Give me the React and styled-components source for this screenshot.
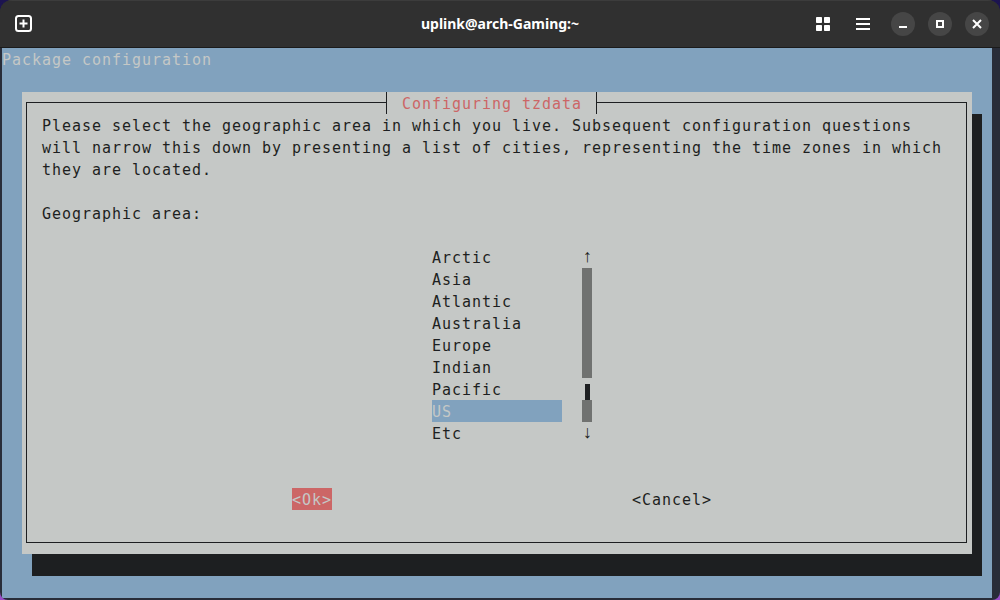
import styled, { createGlobalStyle } from "styled-components";

const GlobalStyle = createGlobalStyle`
  html, body {
    margin: 0;
    padding: 0;
    background: #000;
  }
`;

const areas = ["Arctic", "Asia", "Atlantic", "Australia", "Europe", "Indian", "Pacific", "US", "Etc"];

const App = () => {
  return (
    <>
      <GlobalStyle />
      <Desktop>
        <Window>
          <HeaderBar>
            <HeaderLeft>
              <IconButton aria-label="New tab">
                <svg width="17" height="17" viewBox="0 0 17 17" fill="none">
                  <rect x="1" y="1" width="15" height="15" rx="2.5" stroke="#fff" strokeWidth="2" />
                  <path d="M8.5 4.5v8M4.5 8.5h8" stroke="#fff" strokeWidth="2" />
                </svg>
              </IconButton>
            </HeaderLeft>
            <HeaderTitle>uplink@arch-Gaming:~</HeaderTitle>
            <HeaderRight>
              <IconButton aria-label="Tabs overview">
                <svg width="14" height="14" viewBox="0 0 14 14" fill="#fff">
                  <rect x="0" y="0" width="6" height="6" rx="0.8" />
                  <rect x="8" y="0" width="6" height="6" rx="0.8" />
                  <rect x="0" y="8" width="6" height="6" rx="0.8" />
                  <rect x="8" y="8" width="6" height="6" rx="0.8" />
                </svg>
              </IconButton>
              <MenuButton aria-label="Menu">
                <svg width="14" height="12" viewBox="0 0 14 12" fill="#fff">
                  <rect x="0" y="0" width="14" height="2" />
                  <rect x="0" y="5" width="14" height="2" />
                  <rect x="0" y="10" width="14" height="2" />
                </svg>
              </MenuButton>
              <RoundButtons>
                <RoundButton aria-label="Minimize">
                  <svg width="10" height="10" viewBox="0 0 10 10" fill="#fff">
                    <rect x="1" y="7" width="8" height="2" />
                  </svg>
                </RoundButton>
                <RoundButton aria-label="Maximize">
                  <svg width="10" height="10" viewBox="0 0 10 10" fill="none">
                    <rect x="2" y="2" width="6" height="6" stroke="#fff" strokeWidth="2" />
                  </svg>
                </RoundButton>
                <RoundButton aria-label="Close">
                  <svg width="10" height="10" viewBox="0 0 10 10" fill="none">
                    <path d="M1 1l8 8M9 1l-8 8" stroke="#fff" strokeWidth="2" />
                  </svg>
                </RoundButton>
              </RoundButtons>
            </HeaderRight>
          </HeaderBar>
          <TerminalArea>
            <Screen>
              <ScreenTitle>Package configuration</ScreenTitle>
              <Dialog>
                <Frame>
                  <Legend>Configuring tzdata</Legend>
                  <Line>Please select the geographic area in which you live. Subsequent configuration questions</Line>
                  <Line>will narrow this down by presenting a list of cities, representing the time zones in which</Line>
                  <Line>they are located.</Line>
                  <Line>&nbsp;</Line>
                  <Line>Geographic area:</Line>
                  <ListArea>
                    <List>
                      {areas.map((area) => (
                        <ListItem key={area} $selected={area === "US"}>{area}</ListItem>
                      ))}
                    </List>
                    <Scrollbar>
                      <Arrow>↑</Arrow>
                      <Track />
                      <ThumbCell><Thumb /></ThumbCell>
                      <TrackCell />
                      <Arrow>↓</Arrow>
                    </Scrollbar>
                  </ListArea>
                  <Buttons>
                    <DialogButton $active>&lt;Ok&gt;</DialogButton>
                    <DialogButton>&lt;Cancel&gt;</DialogButton>
                  </Buttons>
                </Frame>
              </Dialog>
            </Screen>
          </TerminalArea>
        </Window>
      </Desktop>
    </>
  );
};

export default App;

const Desktop = styled.div`
  width: 1000px;
  height: 600px;
  overflow: hidden;
  background: linear-gradient(180deg, #1c1450 0%, #4a2a80 50%, #9a4fc8 100%);
`;

const Window = styled.div`
  width: 1000px;
  height: 600px;
  display: flex;
  flex-direction: column;
  border-radius: 12px 12px 8px 8px;
  overflow: hidden;
  background: #292d39;
`;

const HeaderBar = styled.div`
  height: 47px;
  flex: none;
  display: grid;
  grid-template-columns: 1fr auto 1fr;
  align-items: center;
  background: #303030;
  border-bottom: 1px solid #1b1b1b;
  box-shadow: inset 0 1px 0 #3c3c3c;
`;

const HeaderLeft = styled.div`
  display: flex;
  align-items: center;
  padding-left: 15px;
`;

const HeaderRight = styled.div`
  display: flex;
  align-items: center;
  justify-content: flex-end;
  padding-right: 11px;
`;

const HeaderTitle = styled.div`
  font-family: "Noto Sans", sans-serif;
  font-weight: 700;
  font-size: 14px;
  color: #ffffff;
`;

const IconButton = styled.div`
  display: flex;
  align-items: center;
  justify-content: center;
`;

const MenuButton = styled(IconButton)`
  margin-left: 26px;
`;

const RoundButtons = styled.div`
  display: flex;
  gap: 13px;
  margin-left: 21px;
`;

const RoundButton = styled.div`
  width: 24px;
  height: 24px;
  border-radius: 50%;
  background: #464646;
  display: flex;
  align-items: center;
  justify-content: center;
`;

const TerminalArea = styled.div`
  flex: 1;
  padding: 0 8px 2px 2px;
`;

const Screen = styled.div`
  height: 550px;
  background: #81a2be;
  font-family: "DejaVu Sans Mono", monospace;
  font-size: 15px;
  letter-spacing: 0.97px;
  line-height: 24px;
  white-space: pre;
  color: #1d1f21;
`;

const ScreenTitle = styled.div`
  height: 22px;
  color: #c5c8c6;
`;

const Dialog = styled.div`
  width: 950px;
  height: 462px;
  box-sizing: border-box;
  margin: 22px 0 0 20px;
  padding: 10px 5px 11px 4px;
  background: #c5c8c6;
  box-shadow: 10px 22px 0 #1d1f21;
`;

const Frame = styled.div`
  position: relative;
  height: 441px;
  box-sizing: border-box;
  padding: 11px 0 0 15px;
  border: 1px solid #1d1f21;
`;

const Legend = styled.div`
  position: absolute;
  top: -11px;
  left: 359px;
  width: 211px;
  height: 22px;
  box-sizing: border-box;
  padding-left: 15px;
  background: #c5c8c6;
  border-left: 1px solid #1d1f21;
  border-right: 1px solid #1d1f21;
  color: #cc6666;
`;

const Line = styled.div`
  height: 22px;
`;

const ListArea = styled.div`
  display: flex;
  gap: 20px;
  margin: 22px 0 0 390px;
`;

const List = styled.div`
  width: 130px;
`;

const ListItem = styled.div`
  height: 22px;
  background: ${(props) => (props.$selected ? "#81a2be" : "transparent")};
  color: ${(props) => (props.$selected ? "#c5c8c6" : "#1d1f21")};
`;

const Scrollbar = styled.div`
  width: 10px;
  display: flex;
  flex-direction: column;
`;

const Arrow = styled.div`
  height: 22px;
  width: 8px;
  text-align: center;
  font-family: "Liberation Mono", monospace;
  font-size: 18px;
  letter-spacing: 0;
  line-height: 22px;
`;

const Track = styled.div`
  height: 110px;
  background: #707270;
`;

const ThumbCell = styled.div`
  height: 22px;
  display: flex;
  align-items: flex-end;
  justify-content: center;
`;

const Thumb = styled.div`
  width: 5px;
  height: 16px;
  background: #1d1f21;
`;

const TrackCell = styled.div`
  height: 22px;
  background: #707270;
`;

const Buttons = styled.div`
  display: flex;
  gap: 300px;
  margin: 44px 0 0 250px;
`;

const DialogButton = styled.div`
  height: 22px;
  background: ${(props) => (props.$active ? "#cc6666" : "transparent")};
  color: ${(props) => (props.$active ? "#c5c8c6" : "#1d1f21")};
`;
